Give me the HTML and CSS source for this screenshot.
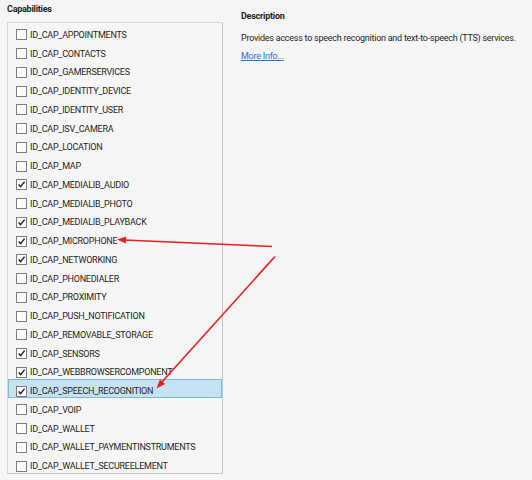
FILE: index.html
```html
<!DOCTYPE html>
<html>
<head>
<meta charset="utf-8">
<link rel="stylesheet" href="styles.css">
</head>
<body>
<div class="page">
  <section class="caps">
    <h2 class="title">Capabilities</h2>
    <ul class="list">
      <li class="row"><span class="cb"></span><span class="label">ID_CAP_APPOINTMENTS</span></li>
      <li class="row"><span class="cb"></span><span class="label">ID_CAP_CONTACTS</span></li>
      <li class="row"><span class="cb"></span><span class="label">ID_CAP_GAMERSERVICES</span></li>
      <li class="row"><span class="cb"></span><span class="label">ID_CAP_IDENTITY_DEVICE</span></li>
      <li class="row"><span class="cb"></span><span class="label">ID_CAP_IDENTITY_USER</span></li>
      <li class="row"><span class="cb"></span><span class="label">ID_CAP_ISV_CAMERA</span></li>
      <li class="row"><span class="cb"></span><span class="label">ID_CAP_LOCATION</span></li>
      <li class="row"><span class="cb"></span><span class="label">ID_CAP_MAP</span></li>
      <li class="row"><span class="cb checked"><svg viewBox="0 0 9 9"><path d="M1.6 4.4 L3.6 6.6 L7.6 1.6"/></svg></span><span class="label">ID_CAP_MEDIALIB_AUDIO</span></li>
      <li class="row"><span class="cb"></span><span class="label">ID_CAP_MEDIALIB_PHOTO</span></li>
      <li class="row"><span class="cb checked"><svg viewBox="0 0 9 9"><path d="M1.6 4.4 L3.6 6.6 L7.6 1.6"/></svg></span><span class="label">ID_CAP_MEDIALIB_PLAYBACK</span></li>
      <li class="row"><span class="cb checked"><svg viewBox="0 0 9 9"><path d="M1.6 4.4 L3.6 6.6 L7.6 1.6"/></svg></span><span class="label">ID_CAP_MICROPHONE</span></li>
      <li class="row"><span class="cb checked"><svg viewBox="0 0 9 9"><path d="M1.6 4.4 L3.6 6.6 L7.6 1.6"/></svg></span><span class="label">ID_CAP_NETWORKING</span></li>
      <li class="row"><span class="cb"></span><span class="label">ID_CAP_PHONEDIALER</span></li>
      <li class="row"><span class="cb"></span><span class="label">ID_CAP_PROXIMITY</span></li>
      <li class="row"><span class="cb"></span><span class="label">ID_CAP_PUSH_NOTIFICATION</span></li>
      <li class="row"><span class="cb"></span><span class="label">ID_CAP_REMOVABLE_STORAGE</span></li>
      <li class="row"><span class="cb checked"><svg viewBox="0 0 9 9"><path d="M1.6 4.4 L3.6 6.6 L7.6 1.6"/></svg></span><span class="label">ID_CAP_SENSORS</span></li>
      <li class="row"><span class="cb checked"><svg viewBox="0 0 9 9"><path d="M1.6 4.4 L3.6 6.6 L7.6 1.6"/></svg></span><span class="label">ID_CAP_WEBBROWSERCOMPONENT</span></li>
      <li class="row selected"><span class="cb checked"><svg viewBox="0 0 9 9"><path d="M1.6 4.4 L3.6 6.6 L7.6 1.6"/></svg></span><span class="label">ID_CAP_SPEECH_RECOGNITION</span></li>
      <li class="row"><span class="cb"></span><span class="label">ID_CAP_VOIP</span></li>
      <li class="row"><span class="cb"></span><span class="label">ID_CAP_WALLET</span></li>
      <li class="row"><span class="cb"></span><span class="label">ID_CAP_WALLET_PAYMENTINSTRUMENTS</span></li>
      <li class="row"><span class="cb"></span><span class="label">ID_CAP_WALLET_SECUREELEMENT</span></li>
    </ul>
  </section>
  <section class="desc">
    <h2 class="title desc-title">Description</h2>
    <p class="desc-text">Provides access to speech recognition and text-to-speech (TTS) services.</p>
    <a class="more" href="#">More Info...</a>
  </section>
  <svg class="arrows" width="532" height="480" viewBox="0 0 532 480">
    <line x1="272" y1="246.5" x2="124" y2="240" />
    <polygon points="117,239.5 126.2,236.4 125.8,243.4" />
    <line x1="275" y1="256.5" x2="161" y2="383" />
    <polygon points="156.5,388.5 165.1,384.1 159.9,379.5" />
  </svg>
</div>
</body>
</html>
```
FILE: styles.css
```css
html, body {
  margin: 0;
  padding: 0;
  background: #f5f5f5;
}
body {
  font-family: Roboto, "Noto Sans", sans-serif;
  font-size: 9px;
  letter-spacing: -0.25px;
  color: #1e1e1e;
}
.page {
  position: relative;
  display: flex;
  width: 532px;
  height: 480px;
}
.caps {
  margin-left: 7px;
  width: 216px;
}
.title {
  margin: 0;
  font-size: 9px;
  font-weight: bold;
  line-height: 14px;
  height: 22px;
  padding-top: 2px;
  box-sizing: border-box;
}
.list {
  list-style: none;
  margin: 0;
  padding: 0;
  height: 452px;
  box-sizing: border-box;
  border: 1px solid #d6d6d6;
  border-right-color: #c4c4ca;
  border-bottom-color: #c4c4ca;
  background: #f6f6f6;
}
.row {
  display: flex;
  align-items: center;
  height: 18.75px;
  box-sizing: border-box;
  padding-top: 5px;
  padding-left: 8px;
}
.row.selected {
  background: #c6e2f1;
  box-shadow: inset 0 0 0 1px #77bbe3;
}
.cb {
  width: 11px;
  height: 11px;
  box-sizing: border-box;
  border: 1px solid #7c7c7c;
  background: #fff;
  display: flex;
  align-items: center;
  justify-content: center;
  flex: none;
}
.cb svg {
  width: 9px;
  height: 9px;
  display: block;
}
.cb svg path {
  fill: none;
  stroke: #222;
  stroke-width: 1.5;
}
.label {
  margin-left: 3px;
  line-height: 12px;
  white-space: nowrap;
}
.desc {
  margin-left: 18px;
  padding-top: 9px;
}
.desc-title {
  height: auto;
  padding-top: 0;
}
.desc-text {
  margin: 9px 0 0;
  line-height: 12px;
  white-space: nowrap;
}
.more {
  display: inline-block;
  margin-top: 6px;
  line-height: 12px;
  color: #1f73cc;
  text-decoration: underline;
}
.arrows {
  position: absolute;
  left: 0;
  top: 0;
  pointer-events: none;
}
.arrows line {
  stroke: #ec1c24;
  stroke-width: 1.6;
}
.arrows polygon {
  fill: #ec1c24;
}
```
